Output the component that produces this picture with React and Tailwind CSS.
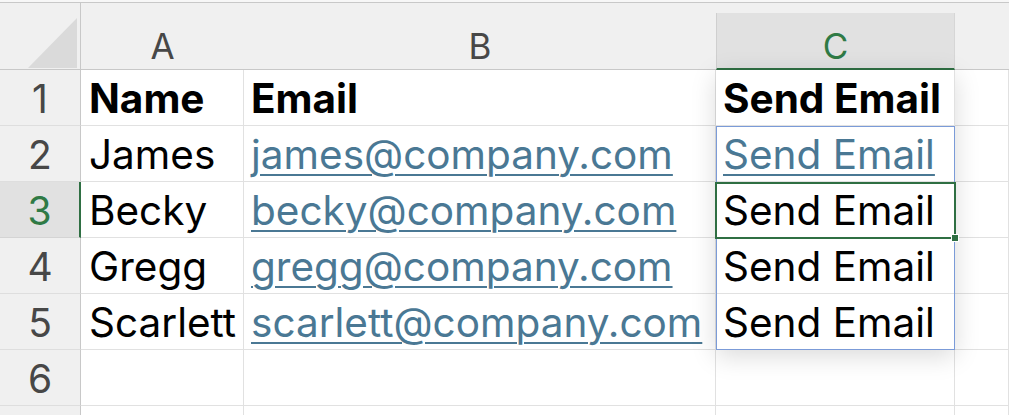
import React from "react";

const FONT = { fontFamily: "Inter, 'Open Sans', Arial, sans-serif" };

const rows = [
  { n: "1", a: "Name", b: "Email", c: "Send Email", bold: true },
  { n: "2", a: "James", b: "james@company.com", c: "Send Email", cLink: true },
  { n: "3", a: "Becky", b: "becky@company.com", c: "Send Email", active: true },
  { n: "4", a: "Gregg", b: "gregg@company.com", c: "Send Email" },
  { n: "5", a: "Scarlett", b: "scarlett@company.com", c: "Send Email" },
  { n: "6", a: "", b: "", c: "" },
  { n: "", a: "", b: "", c: "" },
];

function Cell({ children, className = "" }) {
  return (
    <div className={`flex items-end overflow-visible whitespace-nowrap border-b border-r border-[#e1e1e1] bg-white pb-[2px] text-[40.5px] leading-[48px] text-black ${className}`}>
      {children}
    </div>
  );
}

export default function App() {
  return (
    <div className="relative h-[415px] w-[1009px] overflow-hidden bg-white" style={FONT}>
      <div className="h-[2px] bg-[#f7f7f7]" />
      <div className="grid grid-cols-[81px_163px_472px_239px_1fr] grid-rows-[68px_repeat(7,56px)]">
        {/* header */}
        <div className="relative border-b border-r border-t border-[#c8c8c8] bg-[#f0f0f0]">
          <svg className="absolute left-0 top-0" width="81" height="68" viewBox="0 0 81 68">
            <polygon points="28,65 77,15 77,65" fill="#dadada" />
          </svg>
        </div>
        <div className="flex items-end justify-center border-b border-t border-[#c8c8c8] bg-[#f0f0f0] pb-[2px] text-[35px] leading-[42px] text-[#474747]">A</div>
        <div className="flex items-end justify-center border-b border-t border-[#c8c8c8] bg-[#f0f0f0] pb-[2px] text-[35px] leading-[42px] text-[#474747]">B</div>
        <div className="flex flex-col border-t border-[#c8c8c8] bg-[#f0f0f0]">
          <div className="h-[10px]" />
          <div className="flex flex-1 items-end justify-center border-b-[2px] border-l border-r border-b-[#2f6f43] border-l-[#cfcfcf] border-r-[#d6d6d6] bg-[#e1e1e1] pb-[1px] text-[35px] leading-[42px] text-[#2f7a45]">C</div>
        </div>
        <div className="border-b border-t border-[#c8c8c8] bg-[#f0f0f0]" />

        {rows.map((r, i) => (
          <React.Fragment key={i}>
            <div
              className={`flex items-end justify-center border-b pb-[2px] text-[39px] leading-[48px] ${
                r.active
                  ? "border-r-[2px] border-b-[#d4d4d4] border-r-[#2f6f43] bg-[#e1e1e1] text-[#2f7a45]"
                  : "border-r border-b-[#dedede] border-r-[#c8c8c8] bg-[#f0f0f0] text-[#474747]"
              }`}
            >
              {r.n}
            </div>
            <Cell className={`pl-[8px] ${r.bold ? "font-bold" : ""}`}>{r.a}</Cell>
            <Cell className={`pl-[7px] ${r.bold ? "font-bold" : ""}`}>
              {r.bold ? (
                r.b
              ) : (
                <span className="text-[#4a7894] underline decoration-[2px] underline-offset-[5px]">{r.b}</span>
              )}
            </Cell>
            <Cell className={`pl-[7px] ${r.bold ? "font-bold" : ""}`}>
              {r.cLink ? (
                <span className="text-[#4a7894] underline decoration-[2px] underline-offset-[5px]">{r.c}</span>
              ) : (
                r.c
              )}
            </Cell>
            <Cell />
          </React.Fragment>
        ))}
      </div>

      {/* floating range shadow */}
      <div className="pointer-events-none absolute left-[716px] top-[70px] h-[280px] w-[239px] shadow-[0_6px_24px_rgba(0,0,0,0.15)]" />
      {/* blue range border */}
      <div className="pointer-events-none absolute left-[716px] top-[126px] h-[224px] w-[239px] border border-[#7b9bd8]" />
      {/* active cell */}
      <div className="pointer-events-none absolute left-[715px] top-[182px] h-[57px] w-[241px] border-[2px] border-[#2f6f43]">
        <div className="absolute -bottom-[4px] -right-[4px] h-[6px] w-[6px] bg-[#2f6f43] outline outline-1 outline-white" />
      </div>
    </div>
  );
}
